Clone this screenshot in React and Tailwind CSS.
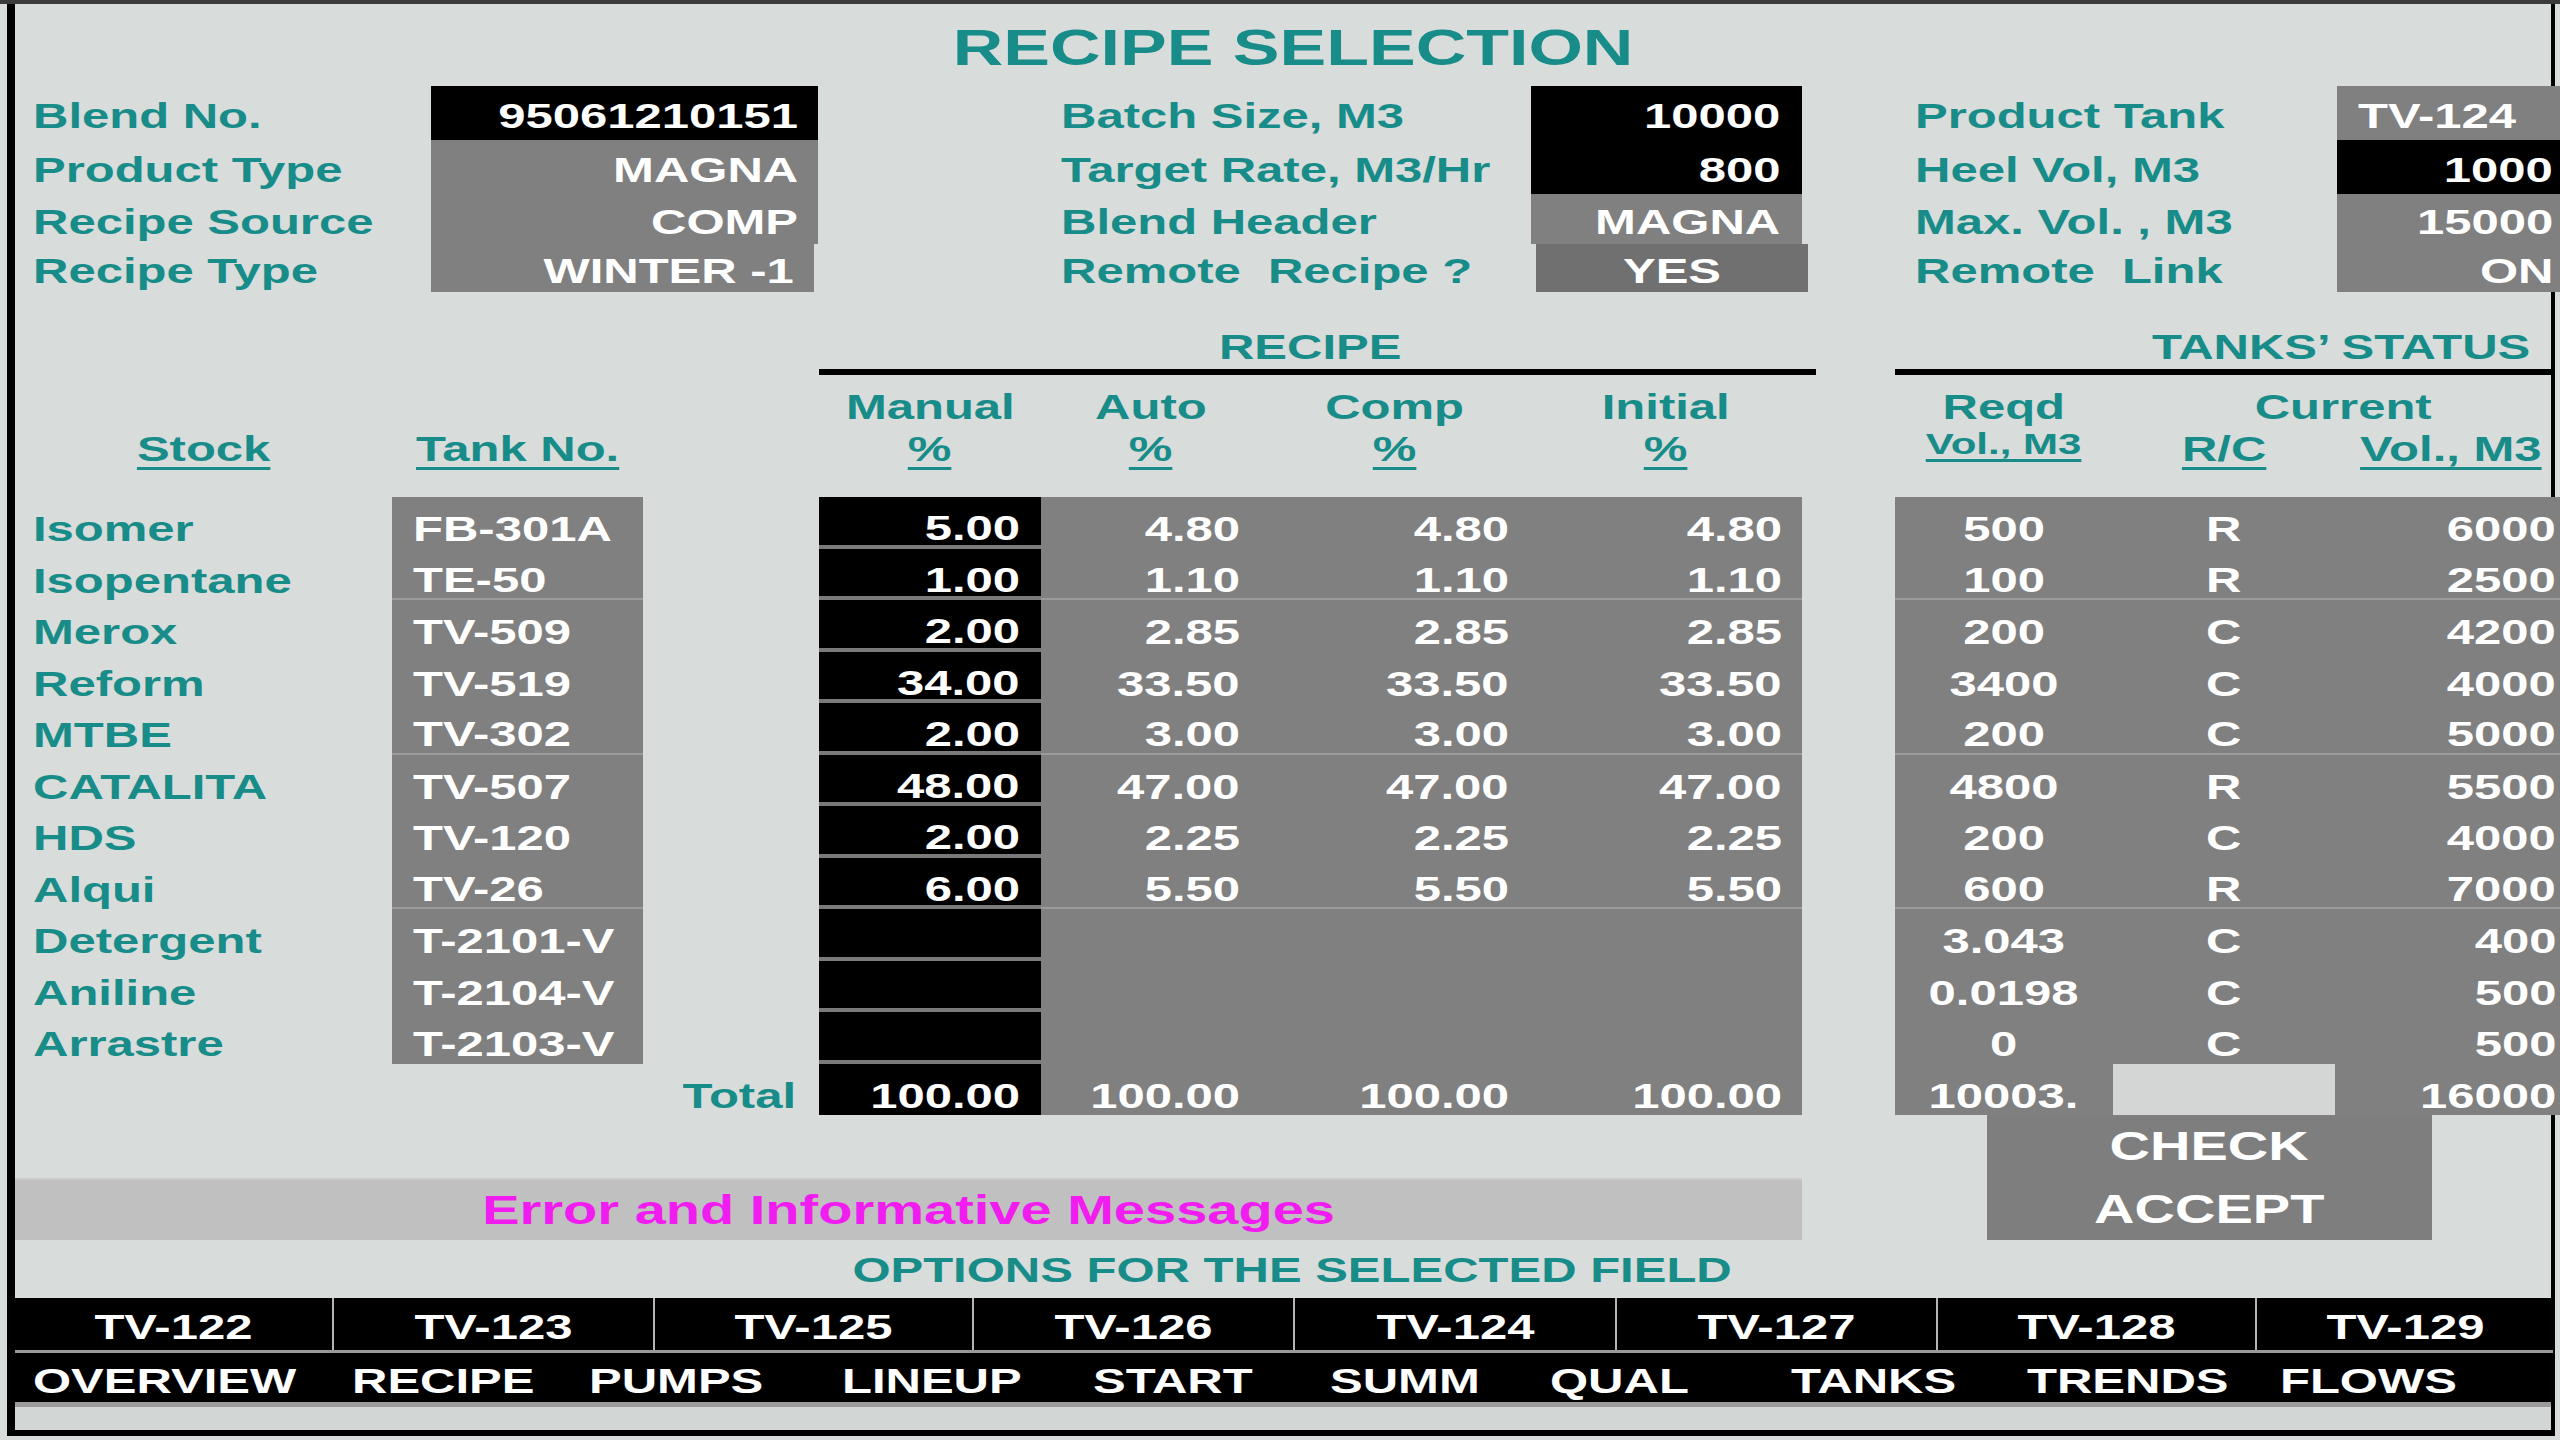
import clsx from "clsx";

const TEAL = "text-[#178c88]";
const GRAY = "bg-[#808080]";
const ORIGIN = { l: "origin-left", r: "origin-right", c: "origin-center" };

// the original capture is stretched sideways, so every label gets the same stretch
function T({ children, a = "l", className }) {
  return <span className={clsx("inline-block whitespace-pre scale-x-140", ORIGIN[a], className)}>{children}</span>;
}

const fields = [
  {
    h: "h-[54px]",
    l1: "Blend No.", v1: "95061210151", b1: "w-[387px] bg-black",
    l2: "Batch Size, M3", v2: "10000", b2: "w-[271px] bg-black justify-end pr-[22px]",
    l3: "Product Tank", v3: "TV-124", b3: "bg-[#808080] justify-start pl-[21px]",
  },
  {
    h: "h-[54px]",
    l1: "Product Type", v1: "MAGNA", b1: "w-[387px] bg-[#808080]",
    l2: "Target Rate, M3/Hr", v2: "800", b2: "w-[271px] bg-black justify-end pr-[22px]",
    l3: "Heel Vol, M3", v3: "1000", b3: "bg-black justify-end pr-[20px]",
  },
  {
    h: "h-[50px]",
    l1: "Recipe Source", v1: "COMP", b1: "w-[387px] bg-[#808080]",
    l2: "Blend Header", v2: "MAGNA", b2: "w-[271px] bg-[#808080] justify-end pr-[22px]",
    l3: "Max. Vol. , M3", v3: "15000", b3: "bg-[#808080] justify-end pr-[20px]",
  },
  {
    h: "h-[48px]",
    l1: "Recipe Type", v1: "WINTER -1", b1: "w-[383px] mr-[4px] bg-[#808080]",
    l2: "Remote  Recipe ?", v2: "YES", b2: "w-[272px] ml-[5px] -mr-[6px] bg-[#707070] justify-center",
    l3: "Remote  Link", v3: "ON", b3: "bg-[#808080] justify-end pr-[20px]",
  },
];

const stocks = [
  ["Isomer", "FB-301A", "5.00", "4.80", "4.80", "4.80", "500", "R", "6000"],
  ["Isopentane", "TE-50", "1.00", "1.10", "1.10", "1.10", "100", "R", "2500"],
  ["Merox", "TV-509", "2.00", "2.85", "2.85", "2.85", "200", "C", "4200"],
  ["Reform", "TV-519", "34.00", "33.50", "33.50", "33.50", "3400", "C", "4000"],
  ["MTBE", "TV-302", "2.00", "3.00", "3.00", "3.00", "200", "C", "5000"],
  ["CATALITA", "TV-507", "48.00", "47.00", "47.00", "47.00", "4800", "R", "5500"],
  ["HDS", "TV-120", "2.00", "2.25", "2.25", "2.25", "200", "C", "4000"],
  ["Alqui", "TV-26", "6.00", "5.50", "5.50", "5.50", "600", "R", "7000"],
  ["Detergent", "T-2101-V", "", "", "", "", "3.043", "C", "400"],
  ["Aniline", "T-2104-V", "", "", "", "", "0.0198", "C", "500"],
  ["Arrastre", "T-2103-V", "", "", "", "", "0", "C", "500"],
];

const tanks = ["TV-122", "TV-123", "TV-125", "TV-126", "TV-124", "TV-127", "TV-128", "TV-129"];

const menu = [
  ["OVERVIEW", "w-[319px]"],
  ["RECIPE", "w-[237px]"],
  ["PUMPS", "w-[253px]"],
  ["LINEUP", "w-[251px]"],
  ["START", "w-[237px]"],
  ["SUMM", "w-[220px]"],
  ["QUAL", "w-[241px]"],
  ["TANKS", "w-[236px]"],
  ["TRENDS", "w-[253px]"],
  ["FLOWS", "w-[200px]"],
];

const ul = "underline decoration-[3px] underline-offset-[6px]";

export default function App() {
  return (
    <div className="w-[2560px] h-[1440px] overflow-hidden bg-[#d8dcdb] border-t-[4px] border-[#3a3a3a] font-['Liberation_Sans',Arial,sans-serif] font-bold text-[35px] leading-none">
      <div className="ml-[7px] w-[2548px] h-[1432px] border-l-[8px] border-r-[4px] border-b-[6px] border-black flex flex-col">
        {/* title */}
        <div className={clsx("h-[82px] shrink-0 flex items-center justify-center pl-[20px] pt-[6px]", TEAL)}>
          <T a="c" className="text-[50px]">RECIPE SELECTION</T>
        </div>

        {/* blend header fields */}
        <div className="flex flex-col shrink-0">
          {fields.map((f) => (
            <div key={f.l1} className={clsx("flex w-max", f.h)}>
              <div className={clsx("w-[416px] pl-[18px] pt-[4px] flex items-center", TEAL)}>
                <T>{f.l1}</T>
              </div>
              <div className={clsx("flex items-center justify-end pr-[20px] pt-[4px] text-white", f.b1)}>
                <T a="r">{f.v1}</T>
              </div>
              <div className={clsx("w-[713px] pl-[243px] pt-[4px] flex items-center", TEAL)}>
                <T>{f.l2}</T>
              </div>
              <div className={clsx("flex items-center pt-[4px] text-white", f.b2)}>
                <T a={f.v2 === "YES" ? "c" : "r"}>{f.v2}</T>
              </div>
              <div className={clsx("w-[535px] pl-[113px] pt-[4px] flex items-center", TEAL)}>
                <T>{f.l3}</T>
              </div>
              <div className={clsx("w-[236px] flex items-center pt-[4px] text-white", f.b3)}>
                <T a={f.v3 === "TV-124" ? "l" : "r"}>{f.v3}</T>
              </div>
            </div>
          ))}
        </div>

        {/* section titles */}
        <div className={clsx("flex w-max h-[40px] mt-[34px] shrink-0", TEAL)}>
          <div className="w-[804px]" />
          <div className="w-[983px] flex items-center justify-center">
            <T a="c">RECIPE</T>
          </div>
          <div className="w-[93px]" />
          <div className="w-[660px] flex items-center justify-end pr-[25px]">
            <T a="r">TANKS’ STATUS</T>
          </div>
        </div>
        <div className="flex w-max h-[6px] mt-[3px] shrink-0">
          <div className="w-[804px]" />
          <div className="w-[997px] bg-black" />
          <div className="w-[79px]" />
          <div className="w-[656px] bg-black" />
        </div>

        {/* column headings */}
        <div className={clsx("flex w-max h-[40px] mt-[11px] shrink-0", TEAL)}>
          <div className="w-[804px]" />
          <div className="w-[222px] flex items-center justify-center"><T a="c">Manual</T></div>
          <div className="w-[219px] flex items-center justify-center"><T a="c">Auto</T></div>
          <div className="w-[269px] flex items-center justify-center"><T a="c">Comp</T></div>
          <div className="w-[273px] flex items-center justify-center"><T a="c">Initial</T></div>
          <div className="w-[93px]" />
          <div className="w-[218px] flex items-center justify-center"><T a="c">Reqd</T></div>
          <div className="w-[460px] flex items-center justify-center"><T a="c">Current</T></div>
        </div>
        <div className={clsx("flex w-max h-[40px] mt-[2px] shrink-0", TEAL)}>
          <div className="w-[377px] flex items-center justify-center"><T a="c" className={ul}>Stock</T></div>
          <div className="w-[251px] flex items-center justify-center"><T a="c" className={ul}>Tank No.</T></div>
          <div className="w-[176px]" />
          <div className="w-[222px] flex items-center justify-center"><T a="c" className={ul}>%</T></div>
          <div className="w-[219px] flex items-center justify-center"><T a="c" className={ul}>%</T></div>
          <div className="w-[269px] flex items-center justify-center"><T a="c" className={ul}>%</T></div>
          <div className="w-[273px] flex items-center justify-center"><T a="c" className={ul}>%</T></div>
          <div className="w-[93px]" />
          <div className="w-[218px] flex items-start justify-center pt-[1px] text-[30px]">
            <T a="c" className="underline decoration-[3px] underline-offset-[5px]">Vol., M3</T>
          </div>
          <div className="w-[222px] flex items-center justify-center"><T a="c" className={ul}>R/C</T></div>
          <div className="w-[238px] flex items-center justify-center pr-[6px]"><T a="c" className={ul}>Vol., M3</T></div>
        </div>

        {/* stock rows */}
        <div className="mt-[29px] flex flex-col shrink-0">
          {stocks.map((r, i) => {
            const sep = i === 1 || i === 4 || i === 7;
            const g = clsx("flex items-center pt-[12px] text-white", GRAY, sep && "border-b-2 border-[#9b9b9b]");
            return (
              <div key={r[0]} className="flex w-max h-[51.5px]">
                <div className={clsx("w-[377px] pl-[18px] pt-[12px] flex items-center", TEAL)}><T>{r[0]}</T></div>
                <div className={clsx("w-[251px] pl-[21px]", g)}><T>{r[1]}</T></div>
                <div className="w-[176px]" />
                <div className="w-[222px] bg-black border-b-4 border-[#7a7a7a] flex items-center justify-end pr-[21px] pt-[14px] text-white">
                  <T a="r">{r[2]}</T>
                </div>
                <div className={clsx("w-[219px] justify-end pr-[20px]", g)}><T a="r">{r[3]}</T></div>
                <div className={clsx("w-[269px] justify-end pr-[20px]", g)}><T a="r">{r[4]}</T></div>
                <div className={clsx("w-[273px] justify-end pr-[20px]", g)}><T a="r">{r[5]}</T></div>
                <div className="w-[93px]" />
                <div className={clsx("w-[218px] justify-center", g)}><T a="c">{r[6]}</T></div>
                <div className={clsx("w-[222px] justify-center", g)}><T a="c">{r[7]}</T></div>
                <div className={clsx("w-[238px] justify-end pr-[17px]", g)}><T a="r">{r[8]}</T></div>
              </div>
            );
          })}

          {/* totals */}
          <div className="flex w-max h-[51.5px]">
            <div className="w-[628px]" />
            <div className={clsx("w-[176px] flex items-center justify-end pr-[23px] pt-[12px]", TEAL)}><T a="r">Total</T></div>
            <div className="w-[222px] bg-black flex items-center justify-end pr-[21px] pt-[12px] text-white"><T a="r">100.00</T></div>
            <div className={clsx("w-[219px] flex items-center justify-end pr-[20px] pt-[12px] text-white", GRAY)}><T a="r">100.00</T></div>
            <div className={clsx("w-[269px] flex items-center justify-end pr-[20px] pt-[12px] text-white", GRAY)}><T a="r">100.00</T></div>
            <div className={clsx("w-[273px] flex items-center justify-end pr-[20px] pt-[12px] text-white", GRAY)}><T a="r">100.00</T></div>
            <div className="w-[93px]" />
            <div className={clsx("w-[218px] flex items-center justify-center pt-[12px] text-white", GRAY)}><T a="c">10003.</T></div>
            <div className="w-[222px] bg-[#d3d6d5]" />
            <div className={clsx("w-[238px] flex items-center justify-end pr-[17px] pt-[12px] text-white", GRAY)}><T a="r">16000</T></div>
          </div>
        </div>

        {/* messages + check/accept */}
        <div className="flex w-max h-[125px] shrink-0">
          <div className="w-[1787px] mt-[63px] h-[62px] bg-[#c0c0c0] border-t-2 border-[#cbcbcb] flex items-center justify-center text-[40px] text-[#f01cf0]">
            <T a="c">Error and Informative Messages</T>
          </div>
          <div className="ml-[185px] w-[445px] bg-[#7e7e7e] flex flex-col text-white text-[40px]">
            <div className="h-[62px] flex items-center justify-center"><T a="c">CHECK</T></div>
            <div className="h-[63px] flex items-center justify-center"><T a="c">ACCEPT</T></div>
          </div>
        </div>

        <div className={clsx("h-[58px] shrink-0 flex items-center justify-center pl-[18px]", TEAL)}>
          <T a="c">OPTIONS FOR THE SELECTED FIELD</T>
        </div>

        {/* bottom navigation */}
        <div className="w-[2538px] bg-black text-white shrink-0">
          <div className="grid grid-cols-[317px_321px_319px_321px_322px_321px_319px_1fr] h-[52px]">
            {tanks.map((t, i) => (
              <div key={t} className={clsx("flex items-center justify-center pt-[5px]", i > 0 && "border-l-2 border-[#b5b5b5]")}>
                <T a="c">{t}</T>
              </div>
            ))}
          </div>
          <div className="h-[3px] bg-[#9a9a9a]" />
          <div className="flex h-[49px] items-center pl-[18px] pt-[5px]">
            {menu.map(([m, w]) => (
              <div key={m} className={clsx("shrink-0", w)}>
                <T>{m}</T>
              </div>
            ))}
          </div>
        </div>
        <div className="h-[5px] bg-[#9a9a9a] shrink-0" />
        <div className="flex-1 bg-[#d2d6d5]" />
      </div>
    </div>
  );
}
